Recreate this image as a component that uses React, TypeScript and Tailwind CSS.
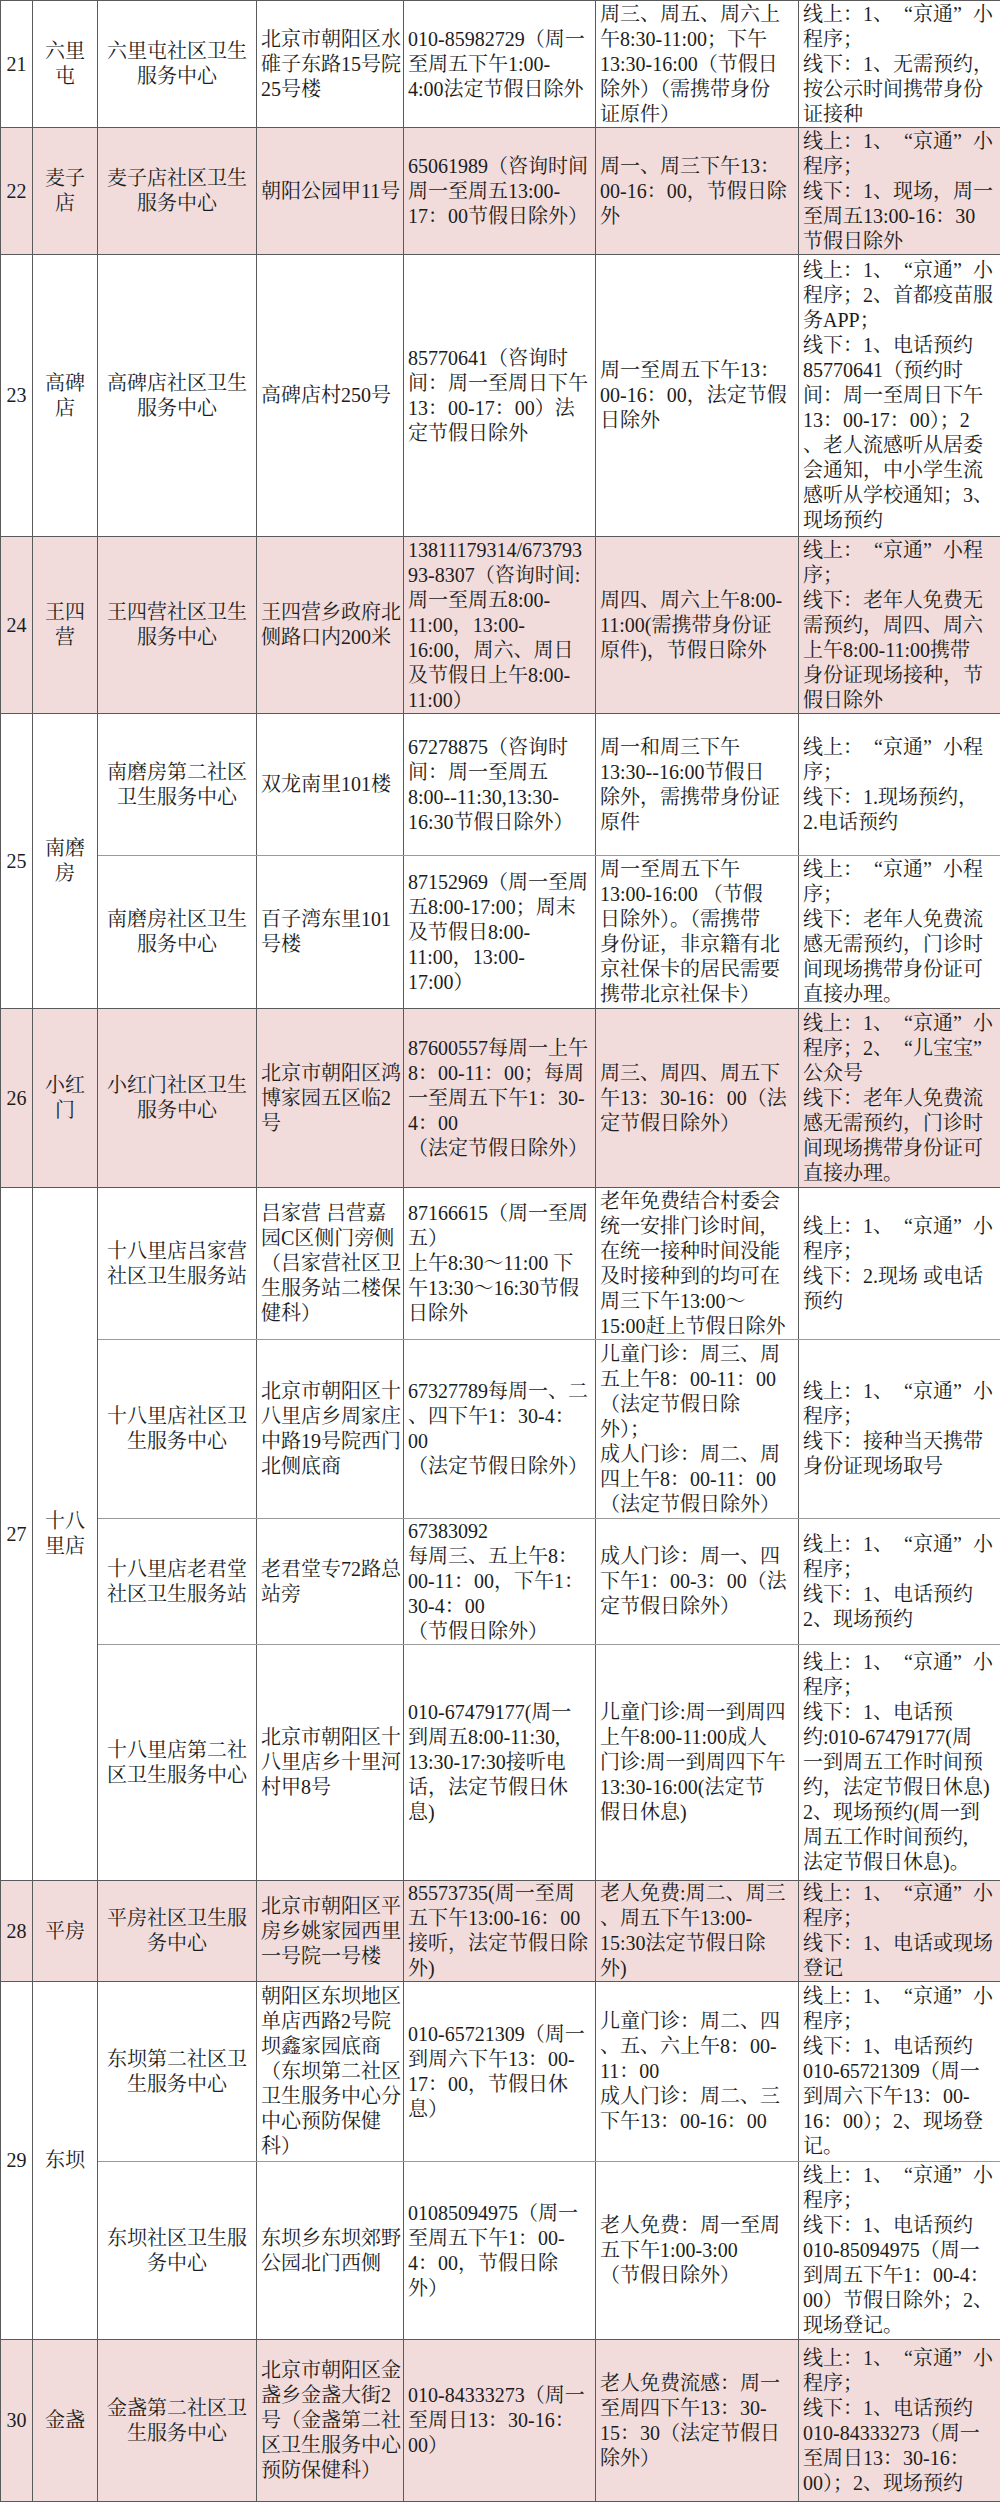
type Sub = {
  name: string;
  addr: string;
  phone: string;
  time: string;
  method: string;
  h: string;
};

type Group = {
  no: string;
  town: string;
  pink: boolean;
  subs: Sub[];
};

const GROUPS: Group[] = [
  {
    no: "21",
    town: "六里\n屯",
    pink: false,
    subs: [
      {
        h: "h-[127px]",
        name: "六里屯社区卫生\n服务中心",
        addr: "北京市朝阳区水\n碓子东路15号院\n25号楼",
        phone: "010-85982729（周一\n至周五下午1:00-\n4:00法定节假日除外",
        time: "周三、周五、周六上\n午8:30-11:00；下午\n13:30-16:00（节假日\n除外）（需携带身份\n证原件）",
        method: "线上：1、“京通”小\n程序；\n线下：1、无需预约，\n按公示时间携带身份\n证接种",
      },
    ],
  },
  {
    no: "22",
    town: "麦子\n店",
    pink: true,
    subs: [
      {
        h: "h-[127px]",
        name: "麦子店社区卫生\n服务中心",
        addr: "朝阳公园甲11号",
        phone: "65061989（咨询时间\n周一至周五13:00-\n17：00节假日除外）",
        time: "周一、周三下午13：\n00-16：00，节假日除\n外",
        method: "线上：1、“京通”小\n程序；\n线下：1、现场，周一\n至周五13:00-16：30\n节假日除外",
      },
    ],
  },
  {
    no: "23",
    town: "高碑\n店",
    pink: false,
    subs: [
      {
        h: "h-[282px]",
        name: "高碑店社区卫生\n服务中心",
        addr: "高碑店村250号",
        phone: "85770641（咨询时\n间：周一至周日下午\n13：00-17：00）法\n定节假日除外",
        time: "周一至周五下午13：\n00-16：00，法定节假\n日除外",
        method:
          "线上：1、“京通”小\n程序；2、首都疫苗服\n务APP；\n线下：1、电话预约\n85770641（预约时\n间：周一至周日下午\n13：00-17：00）；2\n、老人流感听从居委\n会通知，中小学生流\n感听从学校通知；3、\n现场预约",
      },
    ],
  },
  {
    no: "24",
    town: "王四\n营",
    pink: true,
    subs: [
      {
        h: "h-[177px]",
        name: "王四营社区卫生\n服务中心",
        addr: "王四营乡政府北\n侧路口内200米",
        phone:
          "13811179314/673793\n93-8307（咨询时间:\n周一至周五8:00-\n11:00，13:00-\n16:00，周六、周日\n及节假日上午8:00-\n11:00）",
        time: "周四、周六上午8:00-\n11:00(需携带身份证\n原件)，节假日除外",
        method:
          "线上：“京通”小程\n序；\n线下：老年人免费无\n需预约，周四、周六\n上午8:00-11:00携带\n身份证现场接种，节\n假日除外",
      },
    ],
  },
  {
    no: "25",
    town: "南磨\n房",
    pink: false,
    subs: [
      {
        h: "h-[142px]",
        name: "南磨房第二社区\n卫生服务中心",
        addr: "双龙南里101楼",
        phone: "67278875（咨询时\n间：周一至周五\n8:00--11:30,13:30-\n16:30节假日除外）",
        time: "周一和周三下午\n13:30--16:00节假日\n除外，需携带身份证\n原件",
        method: "线上：“京通”小程\n序；\n线下：1.现场预约，\n2.电话预约",
      },
      {
        h: "h-[153px]",
        name: "南磨房社区卫生\n服务中心",
        addr: "百子湾东里101\n号楼",
        phone: "87152969（周一至周\n五8:00-17:00；周末\n及节假日8:00-\n11:00，13:00-\n17:00）",
        time: "周一至周五下午\n13:00-16:00 （节假\n日除外）。（需携带\n身份证，非京籍有北\n京社保卡的居民需要\n携带北京社保卡）",
        method: "线上：“京通”小程\n序；\n线下：老年人免费流\n感无需预约，门诊时\n间现场携带身份证可\n直接办理。",
      },
    ],
  },
  {
    no: "26",
    town: "小红\n门",
    pink: true,
    subs: [
      {
        h: "h-[179px]",
        name: "小红门社区卫生\n服务中心",
        addr: "北京市朝阳区鸿\n博家园五区临2\n号",
        phone: "87600557每周一上午\n8：00-11：00；每周\n一至周五下午1：30-\n4：00\n（法定节假日除外）",
        time: "周三、周四、周五下\n午13：30-16：00（法\n定节假日除外）",
        method:
          "线上：1、“京通”小\n程序；2、“儿宝宝”\n公众号\n线下：老年人免费流\n感无需预约，门诊时\n间现场携带身份证可\n直接办理。",
      },
    ],
  },
  {
    no: "27",
    town: "十八\n里店",
    pink: false,
    subs: [
      {
        h: "h-[152px]",
        name: "十八里店吕家营\n社区卫生服务站",
        addr: "吕家营 吕营嘉\n园C区侧门旁侧\n（吕家营社区卫\n生服务站二楼保\n健科）",
        phone: "87166615（周一至周\n五）\n上午8:30～11:00 下\n午13:30～16:30节假\n日除外",
        time: "老年免费结合村委会\n统一安排门诊时间,\n在统一接种时间没能\n及时接种到的均可在\n周三下午13:00～\n15:00赶上节假日除外",
        method: "线上：1、“京通”小\n程序；\n线下：2.现场 或电话\n预约",
      },
      {
        h: "h-[179px]",
        name: "十八里店社区卫\n生服务中心",
        addr: "北京市朝阳区十\n八里店乡周家庄\n中路19号院西门\n北侧底商",
        phone: "67327789每周一、二\n、四下午1：30-4：\n00\n（法定节假日除外）",
        time: "儿童门诊：周三、周\n五上午8：00-11：00\n（法定节假日除\n外）；\n成人门诊：周二、周\n四上午8：00-11：00\n（法定节假日除外）",
        method: "线上：1、“京通”小\n程序；\n线下：接种当天携带\n身份证现场取号",
      },
      {
        h: "h-[126px]",
        name: "十八里店老君堂\n社区卫生服务站",
        addr: "老君堂专72路总\n站旁",
        phone: "67383092\n每周三、五上午8：\n00-11：00，下午1：\n30-4：00\n（节假日除外）",
        time: "成人门诊：周一、四\n下午1：00-3：00（法\n定节假日除外）",
        method: "线上：1、“京通”小\n程序；\n线下：1、电话预约\n2、现场预约",
      },
      {
        h: "h-[236px]",
        name: "十八里店第二社\n区卫生服务中心",
        addr: "北京市朝阳区十\n八里店乡十里河\n村甲8号",
        phone: "010-67479177(周一\n到周五8:00-11:30,\n13:30-17:30接听电\n话，法定节假日休\n息)",
        time: "儿童门诊:周一到周四\n上午8:00-11:00成人\n门诊:周一到周四下午\n13:30-16:00(法定节\n假日休息)",
        method:
          "线上：1、“京通”小\n程序；\n线下：1、电话预\n约:010-67479177(周\n一到周五工作时间预\n约，法定节假日休息)\n2、现场预约(周一到\n周五工作时间预约,\n法定节假日休息)。",
      },
    ],
  },
  {
    no: "28",
    town: "平房",
    pink: true,
    subs: [
      {
        h: "h-[101px]",
        name: "平房社区卫生服\n务中心",
        addr: "北京市朝阳区平\n房乡姚家园西里\n一号院一号楼",
        phone: "85573735(周一至周\n五下午13:00-16：00\n接听，法定节假日除\n外)",
        time: "老人免费:周二、周三\n、周五下午13:00-\n15:30法定节假日除\n外)",
        method: "线上：1、“京通”小\n程序；\n线下：1、电话或现场\n登记",
      },
    ],
  },
  {
    no: "29",
    town: "东坝",
    pink: false,
    subs: [
      {
        h: "h-[180px]",
        name: "东坝第二社区卫\n生服务中心",
        addr: "朝阳区东坝地区\n单店西路2号院\n坝鑫家园底商\n（东坝第二社区\n卫生服务中心分\n中心预防保健\n科）",
        phone: "010-65721309（周一\n到周六下午13：00-\n17：00，节假日休\n息）",
        time: "儿童门诊：周二、四\n、五、六上午8：00-\n11：00\n成人门诊：周二、三\n下午13：00-16：00",
        method:
          "线上：1、“京通”小\n程序；\n线下：1、电话预约\n010-65721309（周一\n到周六下午13：00-\n16：00）；2、现场登\n记。",
      },
      {
        h: "h-[178px]",
        name: "东坝社区卫生服\n务中心",
        addr: "东坝乡东坝郊野\n公园北门西侧",
        phone: "01085094975（周一\n至周五下午1：00-\n4：00，节假日除\n外）",
        time: "老人免费：周一至周\n五下午1:00-3:00\n（节假日除外）",
        method:
          "线上：1、“京通”小\n程序；\n线下：1、电话预约\n010-85094975（周一\n到周五下午1：00-4：\n00）节假日除外；2、\n现场登记。",
      },
    ],
  },
  {
    no: "30",
    town: "金盏",
    pink: true,
    subs: [
      {
        h: "h-[162px]",
        name: "金盏第二社区卫\n生服务中心",
        addr: "北京市朝阳区金\n盏乡金盏大街2\n号（金盏第二社\n区卫生服务中心\n预防保健科）",
        phone: "010-84333273（周一\n至周日13：30-16：\n00）",
        time: "老人免费流感：周一\n至周四下午13：30-\n15：30（法定节假日\n除外）",
        method:
          "线上：1、“京通”小\n程序；\n线下：1、电话预约\n010-84333273（周一\n至周日13：30-16：\n00）；2、现场预约",
      },
    ],
  },
];

function Line({ text }: { text: string }) {
  const parts = text.split(/([“”])/);
  return (
    <div className="whitespace-nowrap">
      {parts.map((p, i) => {
        if (p === "“")
          return (
            <span key={i} className="inline-block w-[20px] text-right">
              “
            </span>
          );
        if (p === "”")
          return (
            <span key={i} className="inline-block w-[20px] text-left">
              ”
            </span>
          );
        return <span key={i}>{p}</span>;
      })}
    </div>
  );
}

function Lines({ text }: { text: string }) {
  return (
    <>
      {text.split("\n").map((l, i) => (
        <Line key={i} text={l} />
      ))}
    </>
  );
}

const cell = "border border-[#5a5a5a] align-middle px-[4px] py-0";

function App() {
  return (
    <div
      lang="zh-CN"
      className="w-[1000px] bg-white text-[#1c1c1c] text-[20px] leading-[25px] font-['Liberation_Serif','Noto_Serif_CJK_SC','Noto_Sans_CJK_SC',serif]"
    >
      <table className="w-[1000px] table-fixed border-collapse">
        <colgroup>
          <col className="w-[32px]" />
          <col className="w-[65px]" />
          <col className="w-[159px]" />
          <col className="w-[147px]" />
          <col className="w-[192px]" />
          <col className="w-[203px]" />
          <col className="w-[202px]" />
        </colgroup>
        <tbody>
          {GROUPS.map((g) =>
            g.subs.map((s, i) => {
              const last = i === g.subs.length - 1;
              const sub = last ? "" : " border-b-[#9a9a9a]";
              return (
                <tr key={g.no + i} className={(g.pink ? "bg-[#f2dcdb] " : "bg-white ") + s.h}>
                  {i === 0 && (
                    <>
                      <td rowSpan={g.subs.length} className={cell + " text-center px-0"}>
                        {g.no}
                      </td>
                      <td rowSpan={g.subs.length} className={cell + " text-center"}>
                        <Lines text={g.town} />
                      </td>
                    </>
                  )}
                  <td className={cell + " text-center" + sub}>
                    <Lines text={s.name} />
                  </td>
                  <td className={cell + sub}>
                    <Lines text={s.addr} />
                  </td>
                  <td className={cell + sub}>
                    <Lines text={s.phone} />
                  </td>
                  <td className={cell + sub}>
                    <Lines text={s.time} />
                  </td>
                  <td className={cell + sub}>
                    <Lines text={s.method} />
                  </td>
                </tr>
              );
            })
          )}
        </tbody>
      </table>
    </div>
  );
}

export default App;
